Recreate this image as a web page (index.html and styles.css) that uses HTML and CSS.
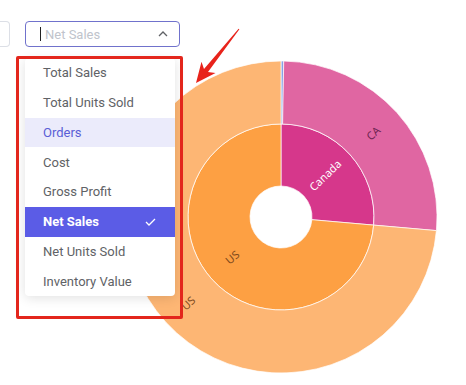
FILE: index.html
```html
<!DOCTYPE html>
<html lang="en">

<head>
    <meta charset="UTF-8">
    <meta name="viewport" content="width=device-width, initial-scale=1.0">
    <title>Sunburst</title>
    <link rel="stylesheet" href="styles.css">
</head>

<body>
    <div class="page">
        <div class="toolbar">
            <div class="stub"></div>
            <div class="select">
                <span class="caret"></span>
                <span class="placeholder">Net Sales</span>
                <svg class="chevron" width="10" height="6" viewBox="0 0 10 6">
                    <path d="M1 5 L5 1 L9 5" fill="none" stroke="#606266" stroke-width="1.3"/>
                </svg>
            </div>
        </div>

        <svg class="chart" width="312" height="312" viewBox="0 0 312 312">
            <g stroke="#fff" stroke-width="1" stroke-opacity="0.7">
                <path fill="#d6378b" d="M156 63 A93 93 0 0 1 248.65 164.11 L186.88 158.70 A31 31 0 0 0 156 125 Z"/>
                <path fill="#fda043" d="M248.65 164.11 A93 93 0 1 1 156 63 L156 125 A31 31 0 1 0 186.88 158.70 Z"/>
                <path fill="#86a3e6" d="M156 0 A156 156 0 0 1 158.72 0.02 L157.62 63.01 A93 93 0 0 0 156 63 Z"/>
                <path fill="#e066a2" d="M158.72 0.02 A156 156 0 0 1 311.41 169.60 L248.65 164.11 A93 93 0 0 0 157.62 63.01 Z"/>
                <path fill="#fdb674" d="M311.41 169.60 A156 156 0 1 1 156 0 L156 63 A93 93 0 1 0 248.65 164.11 Z"/>
            </g>
            <g class="labels">
                <text class="lbl-ca" transform="translate(248 72) rotate(-42)">CA</text>
                <text class="lbl-white" transform="translate(200 114) rotate(-44)">Canada</text>
                <text class="lbl-us" transform="translate(107 196) rotate(-40)">US</text>
                <text class="lbl-us" transform="translate(63 242) rotate(-43)">US</text>
            </g>
        </svg>

        <ul class="menu">
            <li>Total Sales</li>
            <li>Total Units Sold</li>
            <li class="hover">Orders</li>
            <li>Cost</li>
            <li>Gross Profit</li>
            <li class="selected">Net Sales
                <svg class="check" width="11" height="8" viewBox="0 0 11 8">
                    <path d="M1 4 L4 7 L10 1" fill="none" stroke="#fff" stroke-width="1.3"/>
                </svg>
            </li>
            <li>Net Units Sold</li>
            <li>Inventory Value</li>
        </ul>

        <div class="mark"></div>
        <svg class="arrow" width="466" height="385" viewBox="0 0 466 385">
            <polygon fill="#e8231b" points="196,83 215.5,73 208,72.1 239.4,29.3 238.6,28.7 204,68.9 201.5,61.8"/>
        </svg>
    </div>
</body>

</html>
```

FILE: styles.css
```css
* {
    padding: 0;
    margin: 0;
    list-style: none;
    box-sizing: border-box;
}

body {
    background: #fff;
    font-family: Roboto, "Liberation Sans", sans-serif;
}

.page {
    position: relative;
    width: 466px;
    height: 385px;
    overflow: hidden;
}

.toolbar {
    display: flex;
    padding-top: 21px;
}

.toolbar .stub {
    width: 10px;
    height: 26px;
    border: 1px solid #dcdfe6;
    border-left: none;
    border-radius: 0 4px 4px 0;
}

.toolbar .select {
    display: flex;
    align-items: center;
    margin-left: 15px;
    width: 155px;
    height: 26px;
    border: 1px solid #7072cc;
    border-radius: 4px;
    padding: 0 11px 0 14px;
}

.select .caret {
    width: 1px;
    height: 14px;
    background: #222;
}

.select .placeholder {
    flex: 1;
    margin-left: 4px;
    font-size: 13px;
    color: #c0c4cc;
}

.chart {
    display: block;
    margin: 14px 0 0 125px;
}

.labels text {
    font-family: "Noto Sans", "DejaVu Sans", sans-serif;
    font-size: 11px;
    text-anchor: middle;
    dominant-baseline: central;
}

.labels .lbl-ca {
    fill: #6f2552;
}

.labels .lbl-us {
    fill: #7d4a1c;
}

.labels .lbl-white {
    fill: #fff;
}

.menu {
    position: absolute;
    left: 25px;
    top: 58px;
    width: 150px;
    background: #fff;
    border-radius: 4px;
    box-shadow: 0 2px 12px rgba(0, 0, 0, 0.12);
    overflow: hidden;
}

.menu li {
    display: flex;
    align-items: center;
    justify-content: space-between;
    height: 29.75px;
    padding: 0 18px;
    font-size: 13px;
    color: #606266;
}

.menu .hover {
    background: #ebebfb;
    color: #5a5ed6;
}

.menu .selected {
    background: #5b5ce6;
    color: #fff;
    font-weight: 700;
}

.menu .check {
    margin-right: 1px;
}

.mark {
    position: absolute;
    left: 16px;
    top: 56px;
    width: 167px;
    height: 263px;
    border: 3px solid #e3261c;
    border-radius: 2px;
}

.arrow {
    position: absolute;
    left: 0;
    top: 0;
}
```
